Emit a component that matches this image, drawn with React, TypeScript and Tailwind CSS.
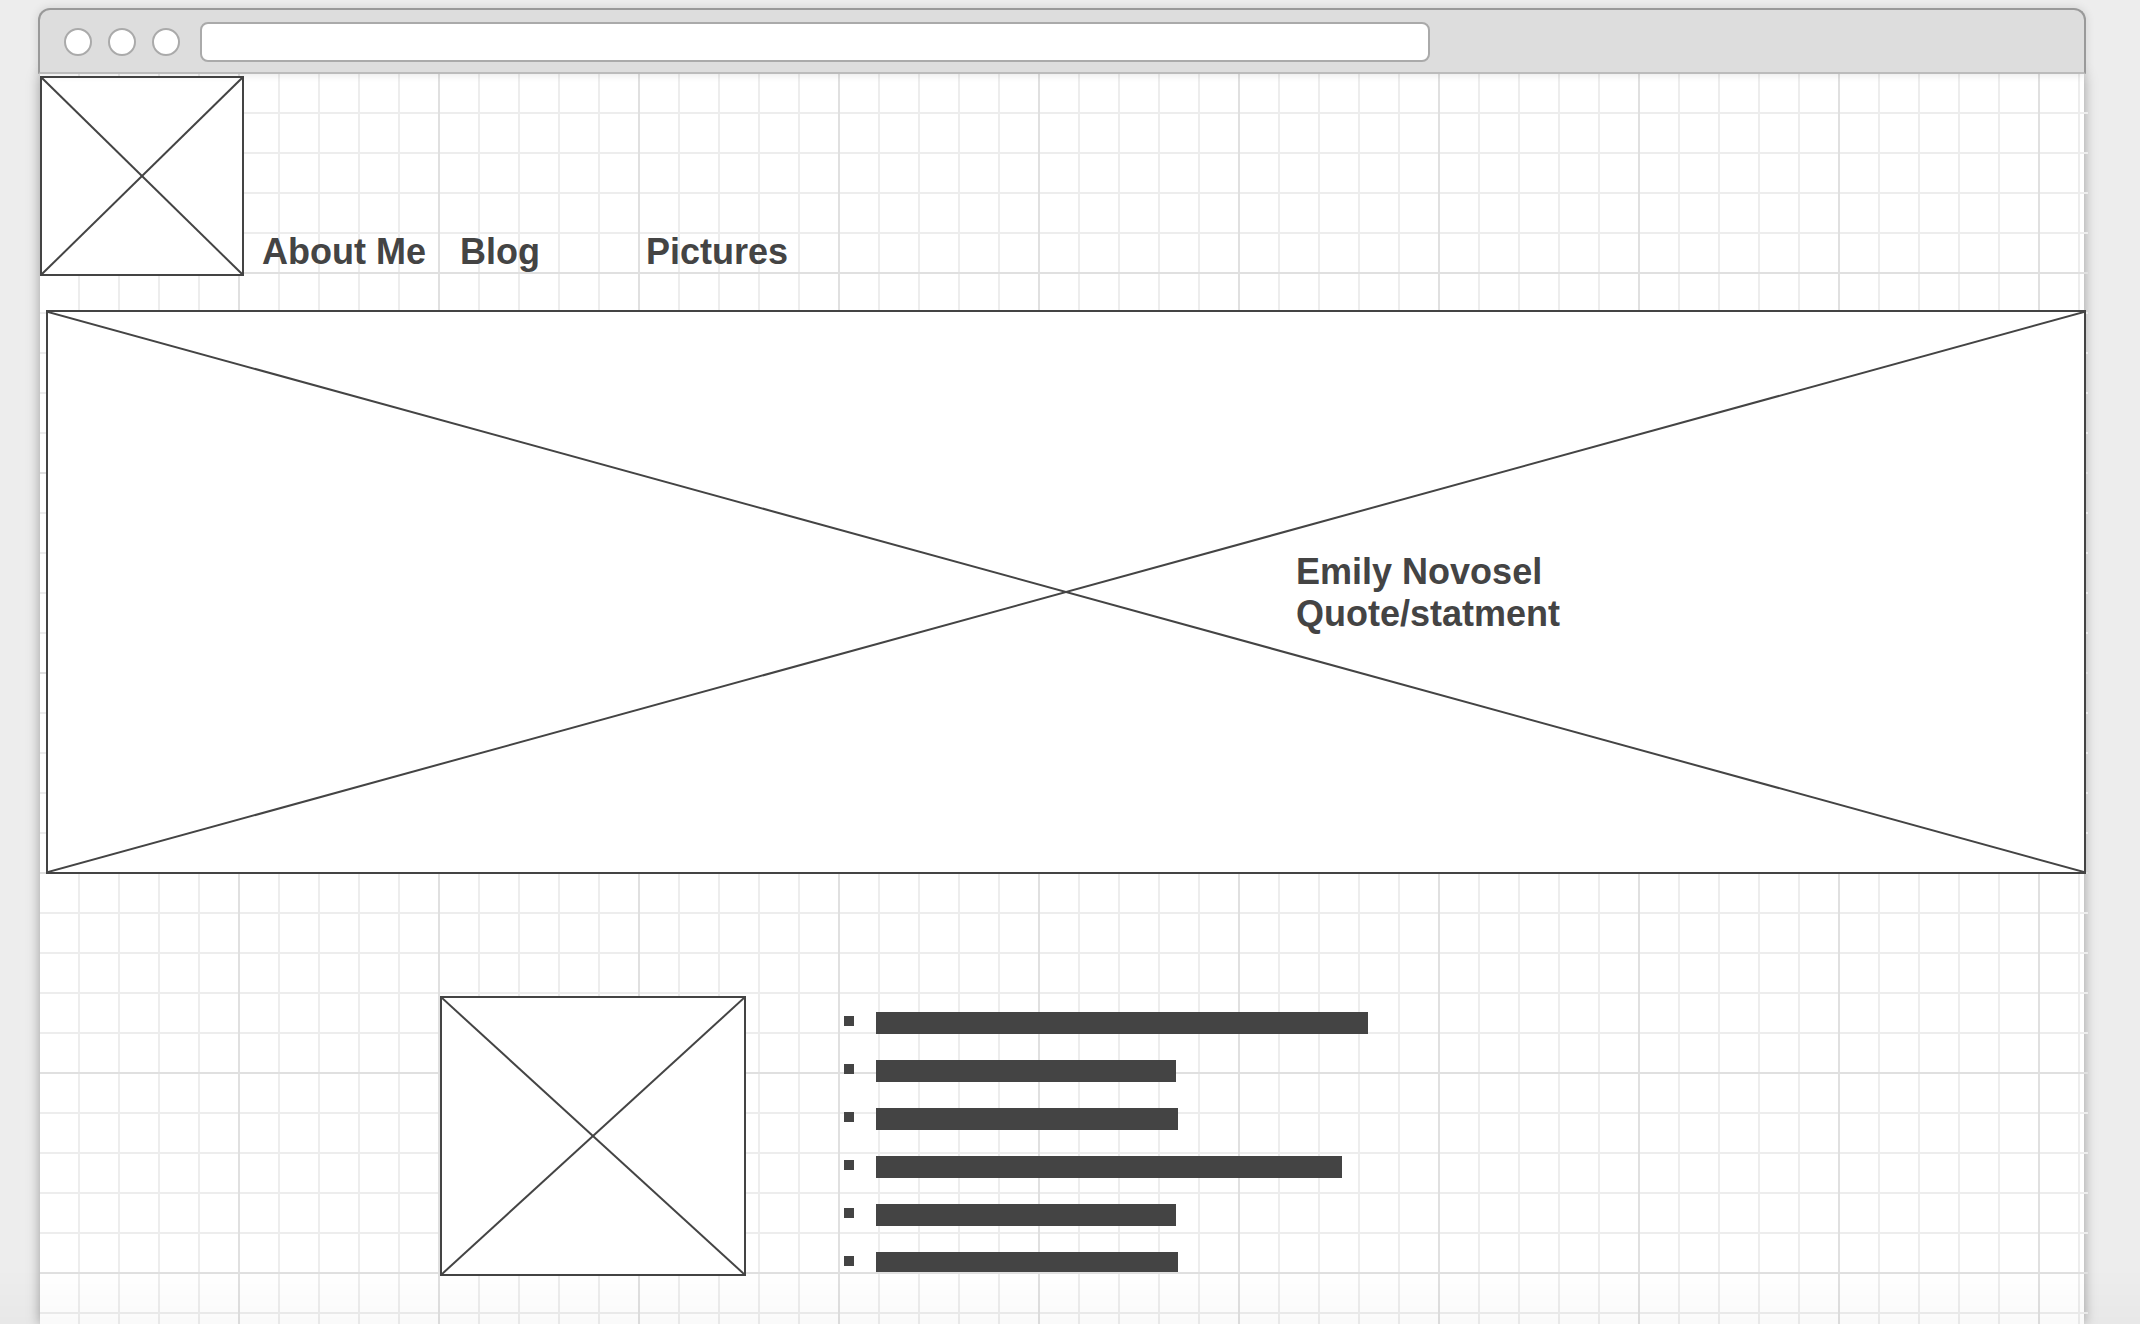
import type { ReactNode } from "react";

const barWidths = [492, 300, 302, 466, 300, 302];

const navLinks = [
  { label: "About Me", className: "w-[198px]" },
  { label: "Blog", className: "w-[186px]" },
  { label: "Pictures", className: "" },
];

function Placeholder({ className, label, children }: { className: string; label: string; children?: ReactNode }) {
  return (
    <div className={`relative border-2 border-[#444] bg-white ${className}`}>
      <svg role="img" aria-label={label} className="absolute inset-0 size-full" stroke="#444" strokeWidth="2">
        <line x1="0" y1="0" x2="100%" y2="100%" />
        <line x1="100%" y1="0" x2="0" y2="100%" />
      </svg>
      {children}
    </div>
  );
}

function BrowserBar() {
  return (
    <header className="relative z-10 -mx-0.5 flex h-[66px] items-center rounded-t-xl border-2 border-[#999] border-b-[#bbb] bg-[#ddd] pt-0.5 shadow-[0_0_10px_rgba(0,0,0,0.12)]">
      <div className="ml-6 flex gap-4">
        <button type="button" aria-label="Close" className="size-7 rounded-full border-2 border-[#aaa] bg-white" />
        <button type="button" aria-label="Minimize" className="size-7 rounded-full border-2 border-[#aaa] bg-white" />
        <button type="button" aria-label="Zoom" className="size-7 rounded-full border-2 border-[#aaa] bg-white" />
      </div>
      <input
        type="text"
        aria-label="Address"
        className="ml-5 box-content h-9 w-3/5 rounded-lg border-2 border-[#aaa] bg-white outline-none"
      />
    </header>
  );
}

export default function App() {
  return (
    <div className="min-h-screen overflow-hidden bg-[#ededed] pt-2 pr-14 pl-10 font-['Liberation_Sans',Arial,sans-serif] text-4xl leading-[42px] font-bold text-[#444]">
      <BrowserBar />
      <main className="relative min-h-[calc(100vh-74px)] bg-white pt-0.5 shadow-[0_0_12px_rgba(0,0,0,0.35)]">
        <div className="absolute inset-y-0 left-0 -right-1 bg-[linear-gradient(to_right,transparent_198px,#e0e0e0_198px),linear-gradient(to_bottom,transparent_198px,#e0e0e0_198px),linear-gradient(to_right,transparent_38px,#ededed_38px),linear-gradient(to_bottom,transparent_38px,#ededed_38px)] bg-size-[200px_200px,200px_200px,40px_40px,40px_40px]" />
        <div className="relative">
          <div className="flex items-end">
            <Placeholder className="h-[200px] w-[204px] shrink-0" label="Logo" />
            <nav className="mb-[3px] ml-[18px] flex">
              {navLinks.map((link) => (
                <a key={link.label} href="#" className={link.className}>
                  {link.label}
                </a>
              ))}
            </nav>
          </div>

          <Placeholder className="mt-[34px] -mr-0.5 ml-1.5 h-[564px]" label="Banner">
            <h1 className="relative ml-[61.3%] pt-[239px]">
              Emily Novosel
              <br />
              Quote/statment
            </h1>
          </Placeholder>

          <section className="mt-[122px] ml-[400px] flex">
            <Placeholder className="h-[280px] w-[306px] shrink-0" label="Picture" />
            <ul className="mt-4 ml-[98px] flex h-[260px] flex-col gap-[26px] overflow-hidden">
              {barWidths.map((width, i) => (
                <li key={i} className="flex shrink-0 gap-[22px]">
                  <span className="mt-1 size-2.5 bg-[#444]" />
                  <span className="h-[22px] bg-[#444]" style={{ width }} />
                </li>
              ))}
            </ul>
          </section>
        </div>
      </main>
      <div className="pointer-events-none fixed inset-x-0 bottom-0 h-14 bg-linear-to-b from-transparent to-black/2" />
    </div>
  );
}
